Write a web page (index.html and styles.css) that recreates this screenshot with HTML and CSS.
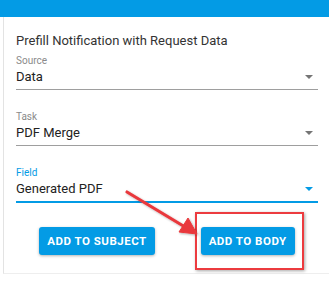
FILE: index.html
```html
<!DOCTYPE html>
<html lang="en">
<head>
  <meta charset="UTF-8" />
  <title>Prefill Notification</title>
  <link rel="stylesheet" href="styles.css">
</head>
<body>

<div class="page">
  <div class="topbar"></div>

  <div class="card">
    <div class="title">Prefill Notification with Request Data</div>

    <!-- Source -->
    <div class="field">
      <label>Source</label>
      <div class="select">
        <span>Data</span>
        <span class="caret"></span>
      </div>
    </div>

    <!-- Task -->
    <div class="field">
      <label>Task</label>
      <div class="select">
        <span>PDF Merge</span>
        <span class="caret"></span>
      </div>
    </div>

    <!-- Field (focused) -->
    <div class="field focused">
      <label>Field</label>
      <div class="select">
        <span>Generated PDF</span>
        <span class="caret"></span>
      </div>
    </div>

    <div class="actions">
      <button type="button" class="btn">Add to Subject</button>
      <button type="button" class="btn">Add to Body</button>
    </div>
  </div>

  <!-- annotation overlay -->
  <div class="highlight"></div>
  <svg class="arrow" width="329" height="282" viewBox="0 0 329 282">
    <defs>
      <filter id="shade" x="-20%" y="-20%" width="140%" height="140%">
        <feDropShadow dx="1" dy="1" stdDeviation="1" flood-color="#000" flood-opacity="0.3"/>
      </filter>
    </defs>
    <g filter="url(#shade)" fill="#e9393c" stroke="#e9393c">
      <line x1="127" y1="192" x2="185" y2="227" stroke-width="3.2" stroke-linecap="round"/>
      <polygon points="197,234 179,232 188,218" stroke-width="1" stroke-linejoin="round"/>
    </g>
  </svg>
</div>

</body>
</html>
```

FILE: styles.css
```css
body {
  font-family: Roboto, 'Liberation Sans', Arial, sans-serif;
  background: #fff;
  margin: 0;
}

.page {
  position: relative;
  width: 329px;
  height: 282px;
  overflow: hidden;
}

.topbar {
  height: 17px;
  background: #039be5;
}

.card {
  margin-left: 3px;
  border-left: 1px solid #e3e3e3;
  border-bottom: 1px solid #eeeeee;
  padding: 16px 11px 18px 12px;
}

.title {
  font-size: 13px;
  line-height: 16px;
  color: #333;
}

.field {
  margin-top: 5px;
}

.field + .field {
  margin-top: 20px;
}

.field label {
  display: block;
  font-size: 10px;
  line-height: 13px;
  color: #8a8a8a;
}

.select {
  display: flex;
  align-items: center;
  justify-content: space-between;
  font-size: 13px;
  line-height: 20px;
  color: #222;
  padding-bottom: 2px;
  border-bottom: 1px solid #9e9e9e;
}

.caret {
  width: 0;
  height: 0;
  margin-right: 5px;
  border-left: 4px solid transparent;
  border-right: 4px solid transparent;
  border-top: 4px solid #757575;
}

.focused label {
  color: #039be5;
}

.focused .select {
  border-bottom: 2px solid #039be5;
}

.focused .caret {
  border-top-color: #039be5;
}

.actions {
  display: flex;
  justify-content: center;
  gap: 46px;
  margin-top: 24px;
}

.btn {
  height: 28px;
  padding: 0 8px;
  background: #039be5;
  color: #fff;
  border: none;
  border-radius: 3px;
  font-family: Roboto, 'Liberation Sans', Arial, sans-serif;
  font-size: 11.5px;
  font-weight: bold;
  letter-spacing: 0.5px;
  text-transform: uppercase;
  box-shadow: 0 1px 3px rgba(0,0,0,0.3);
  cursor: pointer;
}

.highlight {
  position: absolute;
  left: 195px;
  top: 212px;
  width: 105px;
  height: 54px;
  border: 2px solid #ec3b3f;
  box-shadow: 1px 1px 3px rgba(0,0,0,0.35);
}

.arrow {
  position: absolute;
  left: 0;
  top: 0;
  pointer-events: none;
}
```
